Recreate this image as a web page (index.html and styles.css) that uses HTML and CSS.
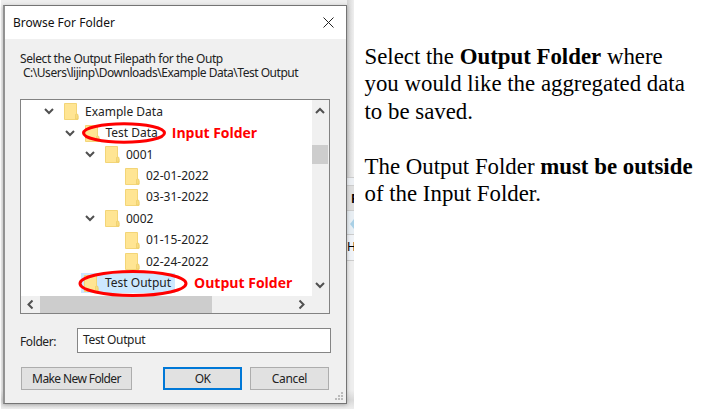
FILE: index.html
```html
<!DOCTYPE html>
<html lang="en">
<head>
<meta charset="utf-8">
<title>Browse For Folder</title>
<link rel="stylesheet" href="styles.css">
</head>
<body>
<svg class="defs" width="0" height="0">
  <symbol id="folder" viewBox="0 0 15 17">
    <path d="M.5.5h12v11.500l1.500.7v3.800H.5z" fill="#ffe593" stroke="#f3d577"/>
    <path d="M11.500 16v-4.500q1.300-1 2.500 0V16z" fill="#f8dc80" stroke="#edcd69" stroke-width=".7"/>
  </symbol>
  <symbol id="down" viewBox="0 0 10 7"><path d="M1 1l4 4 4-4" fill="none" stroke="#505050" stroke-width="2"/></symbol>
</svg>
<main class="page">
  <div class="shot">
    <section class="dialog">
      <header class="titlebar"><span class="title">Browse For Folder</span>
        <svg class="close" viewBox="0 0 11 11"><path d="M.5.5l10 10M10.500.5l-10 10" stroke="#222" fill="none"/></svg>
      </header>
      <div class="content">
        <div class="prompt"><span class="p1">Select the Output Filepath for the Outp</span><span class="p2">C:\Users\lijinp\Downloads\Example Data\Test Output</span></div>
        <div class="tree">
          <div class="upper">
            <ul class="rows">
              <li class="l0"><svg class="chev"><use href="#down"/></svg><svg class="folder"><use href="#folder"/></svg><span class="ex">Example Data</span></li>
              <li class="l1"><svg class="chev"><use href="#down"/></svg><svg class="folder"><use href="#folder"/></svg><span class="td">Test Data</span><b class="note in">Input Folder</b>
                <svg class="ring ring-in" viewBox="0 0 84 22"><ellipse cx="42" cy="11" rx="40.500" ry="9.300"/></svg></li>
              <li class="l2"><svg class="chev"><use href="#down"/></svg><svg class="folder"><use href="#folder"/></svg><span class="num">0001</span></li>
              <li class="l3"><svg class="folder"><use href="#folder"/></svg><span class="date">02-01-2022</span></li>
              <li class="l3"><svg class="folder"><use href="#folder"/></svg><span class="date">03-31-2022</span></li>
              <li class="l2"><svg class="chev"><use href="#down"/></svg><svg class="folder"><use href="#folder"/></svg><span class="num">0002</span></li>
              <li class="l3"><svg class="folder"><use href="#folder"/></svg><span class="date">01-15-2022</span></li>
              <li class="l3"><svg class="folder"><use href="#folder"/></svg><span class="date">02-24-2022</span></li>
              <li class="l1 last"><span class="selected"><svg class="folder"><use href="#folder"/></svg><span class="to">Test Output</span></span><b class="note out">Output Folder</b>
                <svg class="ring ring-out" viewBox="0 0 110 27"><ellipse cx="55" cy="13.500" rx="53" ry="12"/></svg></li>
            </ul>
            <div class="vbar"><svg class="arrow up"><use href="#down"/></svg><i class="thumb"></i><svg class="arrow"><use href="#down"/></svg></div>
          </div>
          <div class="hbar"><svg class="arrow left"><use href="#down"/></svg><i class="track"></i><svg class="arrow right"><use href="#down"/></svg></div>
        </div>
        <div class="field"><span class="label">Folder:</span><div class="input"><span class="val">Test Output</span></div></div>
        <div class="buttons">
          <div class="btn make"><span>Make New Folder</span></div><div class="btn ok"><span>OK</span></div><div class="btn cancel"><span>Cancel</span></div>
        </div>
      </div>
      <svg class="grip" viewBox="0 0 9 9"><path d="M6 0h2v2H6zM3 3h2v2H3zM6 3h2v2H6zM0 6h2v2H0zM3 6h2v2H3zM6 6h2v2H6z" fill="#bbb"/></svg>
    </section>
    <aside class="behind"><div class="b1"></div><div class="b2"></div><div class="b3">F</div><div class="b4"><svg viewBox="0 0 4 10"><path d="M4 0L0 5l4 5z" fill="#a9d0e6"/></svg></div><div class="b5">H</div></aside>
  </div>
  <article class="copy">
    <p><span class="c1">Select the <b>Output Folder</b> where</span><br><span class="c2">you would like the aggregated data</span><br><span class="c3">to be saved.</span></p>
    <p><span class="c4">The Output Folder <b>must be outside</b></span><br><span class="c5">of the Input Folder.</span></p>
  </article>
</main>
</body>
</html>
```
FILE: styles.css
```css
* { box-sizing: border-box; }
body { margin: 0; background: #fff; }
.defs { position: absolute; }
.page { display: flex; width: 708px; height: 418px; overflow: hidden; }
.shot { display: flex; width: 353px; height: 409px; margin-left: 1px; padding: 5px 0 0 2px; background: linear-gradient(#eee, #eee 390px, #d9d9d9 400px, #eee); }
.dialog { position: relative; flex: none; width: 344px; height: 399px; border: 1px solid #747474; border-left: 2px solid #929292; background: #f0f0f0; font: 12px/14px "Noto Sans", sans-serif; color: #222; box-shadow: 0 1px 4px #0004; }
.titlebar { display: flex; justify-content: space-between; height: 33px; padding: 11px 12px 0 8px; background: #fff; line-height: 12px; color: #111; }
.close { width: 11px; height: 11px; }
.content { padding: 13px 15px 0; }
.prompt { display: flex; flex-direction: column; height: 47px; white-space: nowrap; }
.p1 { letter-spacing: -.42px; }
.p2 { margin-left: 3px; letter-spacing: -.48px; }
.tree { display: flex; flex-direction: column; width: 310px; height: 215px; border: 1px solid #828282; background: #fff; }
.upper { display: flex; height: 196px; }
.rows { flex: 1; margin: 0; padding: 1px 0 0 23px; list-style: none; }
.rows li { position: relative; display: flex; align-items: center; height: 21.450px; white-space: nowrap; }
.chev { width: 10px; height: 7px; margin-right: 10px; flex: none; }
.folder { width: 15px; height: 17px; margin-right: 6px; flex: none; }
.l1 { padding-left: 20.500px; }
.l2 { padding-left: 41px; }
.l3 { padding-left: 81px; }
.last { padding-left: 37px; }
.selected { display: flex; align-items: center; height: 20px; width: 94px; padding-left: 3px; background: #cce8ff; }
.note { font: bold 14px/16px "Open Sans", sans-serif; color: #f00; }
.in { margin-left: 14px; letter-spacing: -.05px; }
.out { margin-left: 19px; }
.ring { position: absolute; fill: none; stroke: #f00; stroke-width: 3; overflow: visible; }
.ring-in { left: 38px; top: 0; width: 84px; height: 22px; }
.ring-out { left: 34px; top: -3px; width: 110px; height: 27px; }
.vbar { display: flex; flex-direction: column; width: 17px; align-items: center; background: #f0f0f0; padding: 7px 1px 7px 0; }
.arrow { width: 10px; height: 7px; flex: none; }
.up { transform: rotate(180deg); }
.thumb { width: 16px; height: 19px; margin: 31px 0 auto; background: #cdcdcd; }
.hbar { display: flex; align-items: center; height: 17px; background: #f0f0f0; padding: 0 22px 0 4px; }
.left { transform: rotate(90deg); }
.right { transform: rotate(-90deg); margin-left: auto; }
.track { width: 172px; height: 17px; margin-left: 5px; background: #cdcdcd; }
.field { display: flex; align-items: center; margin-top: 13px; height: 26px; }
.label { width: 57px; padding-top: 4px; letter-spacing: -.4px; }
.input { width: 254px; height: 25px; padding: 4px 5px; border: 1px solid #858585; background: #fff; letter-spacing: -.35px; }
.buttons { display: flex; margin: 14px 0 0 1px; }
.btn { display: flex; align-items: center; justify-content: center; height: 23px; border: 1px solid #adadad; background: #e1e1e1; white-space: nowrap; letter-spacing: -.6px; }
.make { width: 111px; }
.ok { width: 79px; margin-left: 31px; border: 2px solid #0078d7; }
.cancel { width: 79px; margin-left: 8px; letter-spacing: -.35px; }
.grip { position: absolute; right: 2px; bottom: 2px; width: 9px; height: 9px; }
.behind { flex: 1; margin-top: -5px; overflow: hidden; font: 12px/14px "Noto Sans", sans-serif; }
.b1 { height: 177px; background: linear-gradient(90deg, #d2d2d2, #efefef); }
.b2 { height: 9px; border: 1px solid #ccc; border-width: 1px 0; background: #eceff3; }
.b3 { height: 24px; padding: 6px 0 0 4px; background: #dedede; font-weight: bold; }
.b4 { height: 25px; padding: 8px 0 0 3px; border: 1px solid #ccc; border-width: 1px 0; background: #e8eef3; }
.b4 svg { display: block; width: 4px; height: 10px; }
.b5 { height: 26px; padding-top: 5px; border-bottom: 1px solid #ccc; background: #f0f3f7; }
.copy { margin: 43px 0 0 10.500px; font: 22.850px/27.450px "Liberation Serif", serif; color: #000; white-space: nowrap; }
.copy p { margin: 0 0 27.450px; }
```
